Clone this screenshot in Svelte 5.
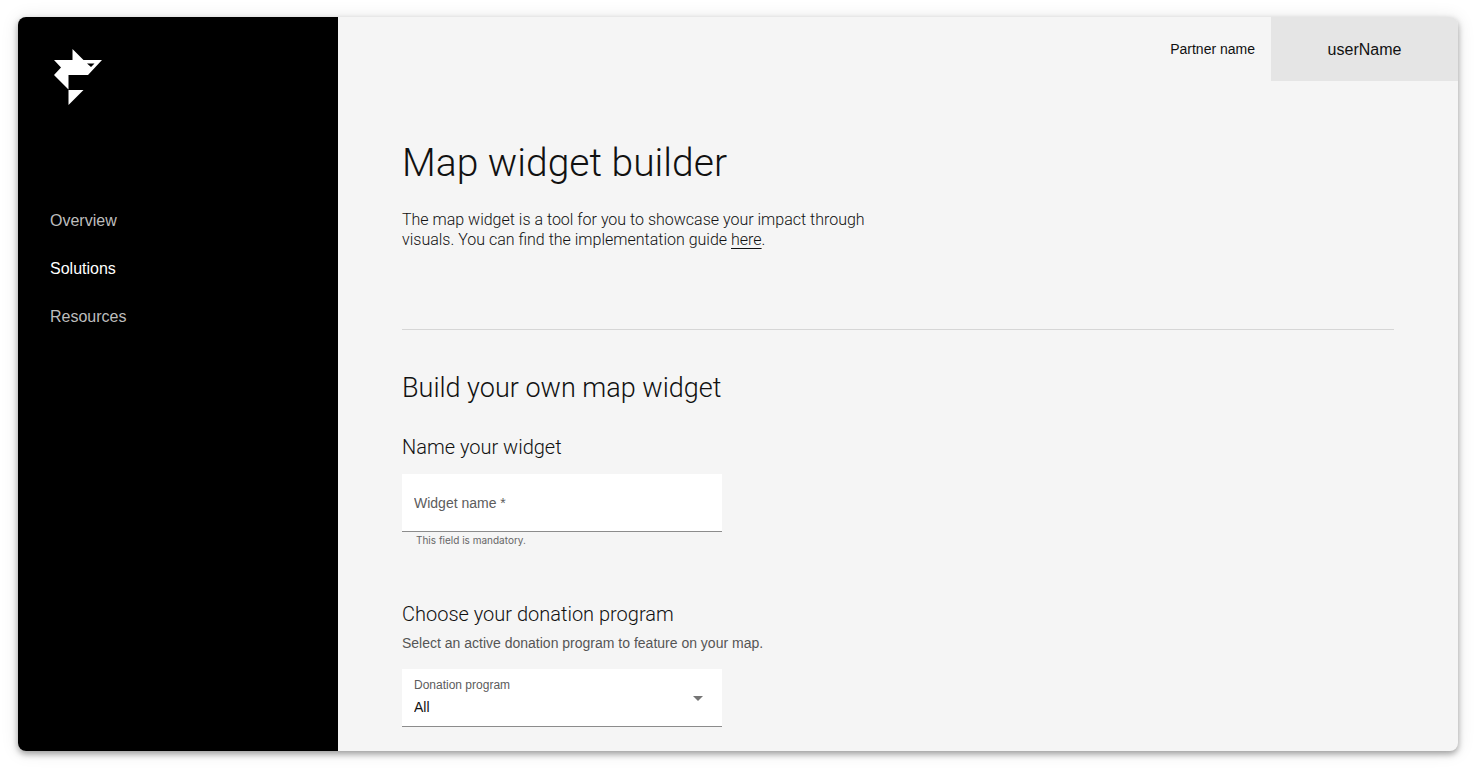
<script lang="ts">
  const links = ['Overview', 'Solutions', 'Resources'];
  const programs = ['All'];

  let active = $state('Solutions');
  let widgetName = $state('');
  let program = $state('All');
</script>

<div class="window">
  <aside class="sidebar">
    <a class="logo" href="/" aria-label="Home">
      <svg width="56" height="64" viewBox="0 0 56 64" fill="#fff" aria-hidden="true">
        <path fill-rule="evenodd" d="M22.500 4 33.500 15H52L38 30H18.500V44.500L4 30 11 22.500 4 15H22.500ZM37 18.500 41 22 44.500 18.500Z" />
        <path d="M18.500 45H33.500L18.500 60Z" />
      </svg>
    </a>
    <nav>
      {#each links as link}
        <a href="#{link.toLowerCase()}" class:active={active === link} onclick={() => (active = link)}>{link}</a>
      {/each}
    </nav>
  </aside>

  <div class="page">
    <header>
      <span class="partner">Partner name</span>
      <button class="user" type="button">userName</button>
    </header>

    <main>
      <h1>Map widget builder</h1>
      <p class="intro">
        The map widget is a tool for you to showcase your impact through visuals. You can find the
        implementation guide <a href="#guide">here</a>.
      </p>
      <hr />

      <h2>Build your own map widget</h2>

      <section>
        <h3>Name your widget</h3>
        <div class="field">
          <input
            id="widget-name"
            type="text"
            placeholder="Widget name *"
            aria-label="Widget name"
            aria-describedby="widget-name-hint"
            required
            bind:value={widgetName}
          />
        </div>
        <p class="hint" id="widget-name-hint">This field is mandatory.</p>
      </section>

      <section>
        <h3>Choose your donation program</h3>
        <p class="description">Select an active donation program to feature on your map.</p>
        <div class="field select">
          <label for="program">Donation program</label>
          <select id="program" bind:value={program}>
            {#each programs as item}
              <option>{item}</option>
            {/each}
          </select>
          <svg class="arrow" width="10" height="5" viewBox="0 0 10 5" aria-hidden="true">
            <path d="M0 0H10L5 5Z" fill="#757575" />
          </svg>
        </div>
      </section>
    </main>
  </div>
</div>

<style>
  :global(body) {
    margin: 0;
    background: #fff;
  }

  .window {
    display: flex;
    margin: 17px 18px 19px;
    overflow: hidden;
    border-radius: 8px;
    background: #f5f5f5;
    box-shadow: 0 3px 6px rgba(0, 0, 0, 0.35), 0 1px 18px rgba(0, 0, 0, 0.1);
    color: #111;
    font-family: Roboto, 'Liberation Sans', sans-serif;
    font-size: 16px;
    font-weight: 300;
    line-height: 20px;
  }

  .sidebar {
    flex: 0 0 320px;
    box-sizing: border-box;
    padding: 28px 32px;
    background: #000;
  }

  .logo {
    display: block;
    width: 56px;
    height: 64px;
  }

  nav {
    display: flex;
    flex-direction: column;
    align-items: flex-start;
    gap: 28px;
    margin-top: 102px;
  }

  nav a {
    color: #bdbdbd;
    text-decoration: none;
  }

  nav a.active {
    color: #fff;
  }

  .page {
    flex: 1;
    min-width: 0;
  }

  header {
    display: flex;
    justify-content: flex-end;
    align-items: center;
    gap: 16px;
    height: 64px;
  }

  nav a,
  .partner,
  .user,
  input,
  select,
  .description,
  .select label {
    font-family: 'Liberation Sans', sans-serif;
    font-weight: 400;
  }

  .partner {
    font-size: 14px;
  }

  .user {
    min-width: 187px;
    height: 64px;
    padding: 2px 32px 0;
    border: 0;
    background: #e5e5e5;
    color: #111;
    font-size: 16px;
  }

  main {
    padding: 58px 64px 24px;
  }

  h1,
  h2,
  h3,
  p {
    margin: 0;
    font-weight: 300;
  }

  h1 {
    font-size: 39px;
    line-height: 48px;
  }

  .intro {
    max-width: 480px;
    margin-top: 23px;
  }

  .intro a {
    color: inherit;
    text-underline-offset: 3px;
  }

  hr {
    height: 1px;
    margin: 79px 0 40px;
    border: 0;
    background: #d6d6d6;
  }

  h2 {
    font-size: 27px;
    line-height: 36px;
  }

  h3 {
    font-size: 20px;
    line-height: 24px;
  }

  section {
    margin-top: 29px;
  }

  section + section {
    margin-top: 54px;
  }

  .field {
    box-sizing: border-box;
    width: 320px;
    max-width: 100%;
    height: 58px;
    margin-top: 15px;
    border-bottom: 1px solid #8c8c8c;
    background: #fff;
  }

  input,
  select {
    box-sizing: border-box;
    width: 100%;
    height: 100%;
    padding: 0 12px;
    border: 0;
    background: transparent;
    color: #111;
    font-size: 14px;
  }

  input::placeholder {
    color: #5c5c5c;
    opacity: 1;
  }

  .hint {
    padding: 0 14px;
    color: #666;
    font-family: Inter, sans-serif;
    font-size: 10px;
    font-weight: 400;
    line-height: 16px;
  }

  .description {
    margin-top: 7px;
    color: #555;
    font-size: 14px;
  }

  .select {
    position: relative;
    margin-top: 16px;
  }

  .select label {
    position: absolute;
    top: 8px;
    left: 12px;
    color: #5c5c5c;
    font-size: 12px;
    line-height: 16px;
    pointer-events: none;
  }

  .select select {
    padding-top: 18px;
    appearance: none;
  }

  .arrow {
    position: absolute;
    top: 27px;
    right: 19px;
    pointer-events: none;
  }
</style>
